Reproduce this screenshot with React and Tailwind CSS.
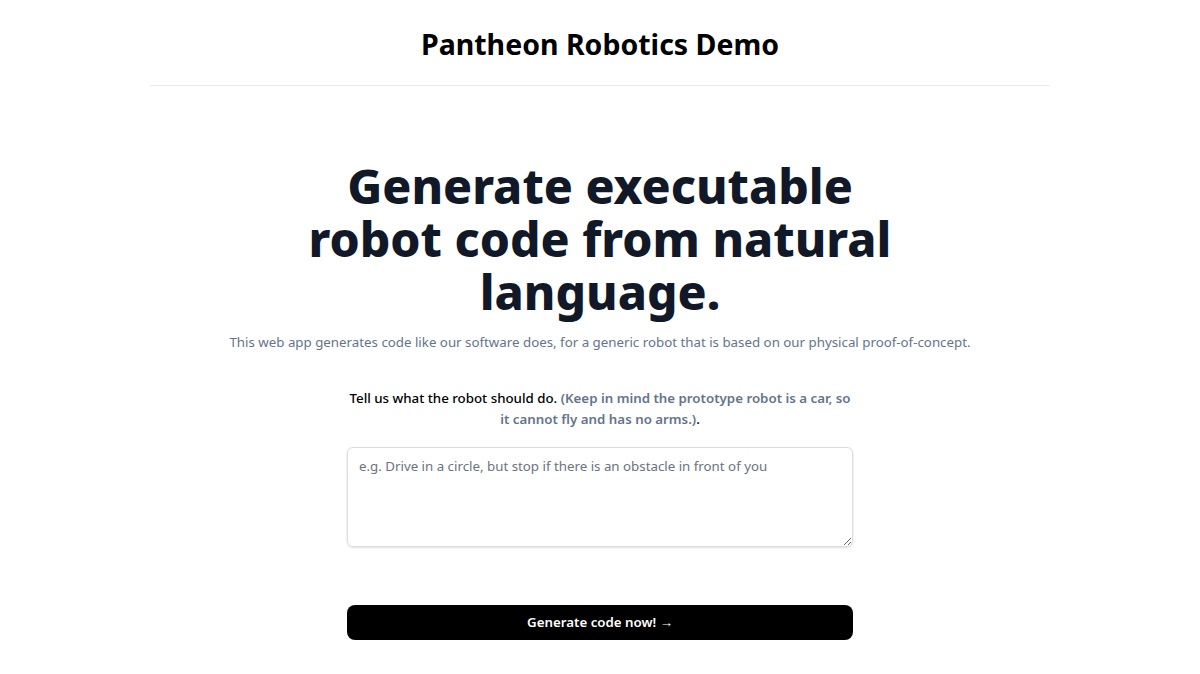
import React, { useState } from 'react';

export default function App() {
  const [prompt, setPrompt] = useState('');

  return (
    <div className="min-h-screen bg-white font-['Noto_Sans',_'Open_Sans',_sans-serif]">
      <header className="mx-auto max-w-[900px] border-b border-[#e9e9ef] pt-[26px] pb-[23px] text-center">
        <h1 className="text-[28.5px] font-bold leading-9 text-black">Pantheon Robotics Demo</h1>
      </header>

      <main className="mx-auto flex max-w-[900px] flex-col items-center pt-[74px] text-center">
        <h2 className="max-w-[620px] text-[48px] font-extrabold leading-[1.1] text-[#111827]">
          Generate executable robot code from natural language.
        </h2>
        <p className="mt-3 text-[13.3px] leading-6 text-[#64748b]">
          This web app generates code like our software does, for a generic robot that is based on our physical proof-of-concept.
        </p>

        <div className="mt-[34px] w-[506px]">
          <label htmlFor="prompt" className="block text-[13.3px] font-medium leading-[21px] text-black">
            Tell us what the robot should do.{' '}
            <span className="font-semibold text-[#64748b]">
              (Keep in mind the prototype robot is a car, so it cannot fly and has no arms.)
            </span>
            <span>.</span>
          </label>

          <textarea
            id="prompt"
            rows={4}
            value={prompt}
            onChange={(e) => setPrompt(e.target.value)}
            placeholder="e.g. Drive in a circle, but stop if there is an obstacle in front of you"
            className="mt-[17px] block h-[100px] w-full rounded-md border border-[#dcdce2] px-[11px] pt-2 pb-2.5 text-left text-[13.3px] leading-5 text-gray-900 placeholder:text-[#6b7280] shadow-sm focus:outline-none"
          />

          <button
            type="button"
            className="mt-[58px] h-[35px] w-full rounded-lg bg-black text-[13.3px] font-semibold text-white"
          >
            Generate code now! →
          </button>
        </div>
      </main>
    </div>
  );
}
